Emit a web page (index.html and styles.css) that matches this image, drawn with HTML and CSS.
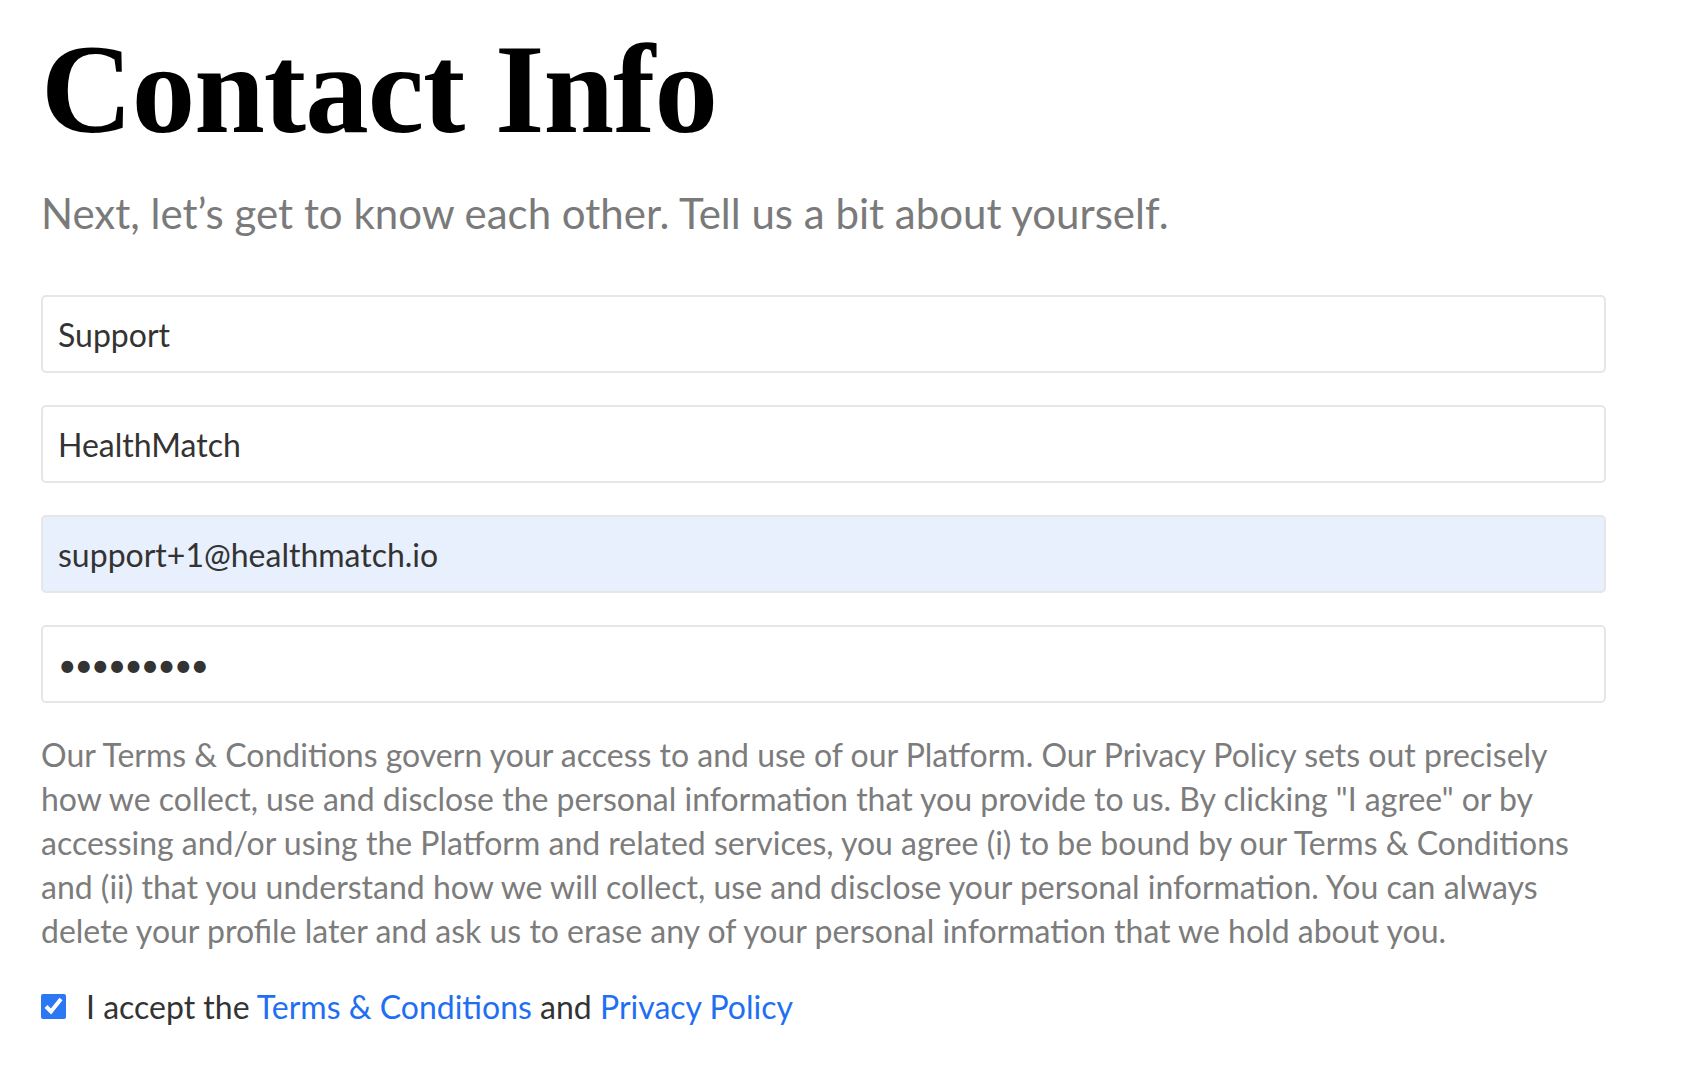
FILE: index.html
```html
<!DOCTYPE html>
<html lang="en">

<head>
    <meta charset="UTF-8">
    <meta name="viewport" content="width=device-width, initial-scale=1.0">
    <title>Contact Info</title>
    <link rel="stylesheet" href="styles.css">
</head>

<body>
    <div class="page">
        <h1 class="title">Contact Info</h1>
        <p class="lead">Next, let’s get to know each other. Tell us a bit about yourself.</p>

        <form action="" class="contact-form">
            <div class="fields">
                <input type="text" class="field" placeholder="First name" value="Support">
                <input type="text" class="field" placeholder="Last name" value="HealthMatch">
                <input type="email" class="field autofill" placeholder="Email" value="support+1@healthmatch.io">
                <input type="password" class="field secret" placeholder="Password" value="123456789">
            </div>

            <p class="terms">Our Terms &amp; Conditions govern your access to and use of our Platform. Our Privacy Policy sets out precisely how we collect, use and disclose the personal information that you provide to us. By clicking "I agree" or by accessing and/or using the Platform and related services, you agree (i) to be bound by our Terms &amp; Conditions and (ii) that you understand how we will collect, use and disclose your personal information. You can always delete your profile later and ask us to erase any of your personal information that we hold about you.</p>

            <label class="accept">
                <input type="checkbox" id="agree" checked>
                <span>I accept the <a href="">Terms &amp; Conditions</a> and <a href="">Privacy Policy</a></span>
            </label>
        </form>
    </div>
</body>

</html>
```

FILE: styles.css
```css
body {
    margin: 0;
    background-color: white;
    font-family: Lato, "Open Sans", sans-serif;
}

.page {
    width: 1565px;
    padding-left: 41px;
}

.title {
    margin: 0;
    padding-top: 26px;
    font-family: "Liberation Serif", "Times New Roman", serif;
    font-weight: bold;
    font-size: 127px;
    line-height: 127px;
    letter-spacing: -1px;
    color: black;
}

.lead {
    margin: 35px 0 0 0;
    font-size: 42px;
    color: #7a7a7a;
}

.contact-form {
    display: flex;
    flex-direction: column;
    margin-top: 57px;
}

.fields {
    display: flex;
    flex-direction: column;
    gap: 32px;
}

.field {
    box-sizing: border-box;
    height: 78px;
    margin: 0;
    padding: 0 15px;
    border: 2px solid #e6e6e6;
    border-radius: 5px;
    background-color: white;
    font-family: Lato, sans-serif;
    font-size: 32px;
    color: #333;
    outline: none;
}

.autofill {
    background-color: #e8f0fe;
}

.secret {
    letter-spacing: -2px;
}

.terms {
    margin: 30px 0 0 0;
    font-size: 32px;
    line-height: 44px;
    color: #7c7c7c;
}

.accept {
    display: flex;
    align-items: center;
    gap: 20px;
    margin-top: 34px;
    font-size: 32px;
    color: #333;
}

.accept input {
    width: 25px;
    height: 25px;
    margin: 0;
    accent-color: #2a78f4;
}

.accept a {
    text-decoration: none;
    color: #1f6ff2;
}
```
